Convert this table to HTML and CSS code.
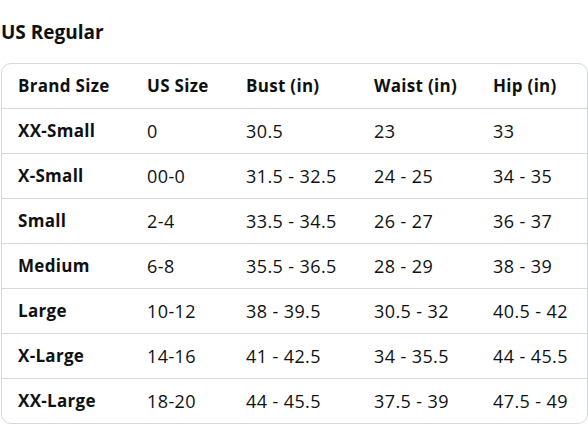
FILE: index.html
```html
<!DOCTYPE html>
<html>
<head>
<meta charset="utf-8">
<link rel="stylesheet" href="styles.css">
</head>
<body>
<h2 class="title">US Regular</h2>
<div class="box">
<table class="chart">
<thead>
<tr><th>Brand Size</th><th>US Size</th><th>Bust (in)</th><th>Waist (in)</th><th>Hip (in)</th></tr>
</thead>
<tbody>
<tr><th>XX-Small</th><td>0</td><td>30.5</td><td>23</td><td>33</td></tr>
<tr><th>X-Small</th><td>00-0</td><td>31.5 - 32.5</td><td>24 - 25</td><td>34 - 35</td></tr>
<tr><th>Small</th><td>2-4</td><td>33.5 - 34.5</td><td>26 - 27</td><td>36 - 37</td></tr>
<tr><th>Medium</th><td>6-8</td><td>35.5 - 36.5</td><td>28 - 29</td><td>38 - 39</td></tr>
<tr><th>Large</th><td>10-12</td><td>38 - 39.5</td><td>30.5 - 32</td><td>40.5 - 42</td></tr>
<tr><th>X-Large</th><td>14-16</td><td>41 - 42.5</td><td>34 - 35.5</td><td>44 - 45.5</td></tr>
<tr><th>XX-Large</th><td>18-20</td><td>44 - 45.5</td><td>37.5 - 39</td><td>47.5 - 49</td></tr>
</tbody>
</table>
</div>
</body>
</html>
```
FILE: styles.css
```css
html, body {
  margin: 0;
  padding: 0;
  background: #ffffff;
}
body {
  font-family: "Open Sans", "Noto Sans", Arial, sans-serif;
  color: #0f1111;
  padding-left: 1px;
  width: 587px;
}
.title {
  margin: 0;
  padding-top: 20px;
  height: 63px;
  box-sizing: border-box;
  font-size: 19px;
  font-weight: 700;
  line-height: 24px;
}
.box {
  border: 1px solid #d5d9d9;
  border-radius: 10px;
  overflow: hidden;
}
.chart {
  width: 100%;
  border-collapse: collapse;
  table-layout: fixed;
}
.chart th, .chart td {
  box-sizing: border-box;
  height: 44px;
  padding: 0 0 0 16px;
  text-align: left;
  vertical-align: middle;
  white-space: nowrap;
}
.chart th {
  font-size: 17px;
  font-weight: 700;
  letter-spacing: 0.3px;
}
.chart td {
  font-size: 18px;
  font-weight: 400;
  letter-spacing: 0.4px;
}
.chart tbody th, .chart tbody td {
  border-top: 1px solid #d5d9d9;
  height: 45px;
}
.chart thead th:nth-child(1) { width: 129px; }
.chart thead th:nth-child(2) { width: 99px; }
.chart thead th:nth-child(3) { width: 128px; }
.chart thead th:nth-child(4) { width: 119px; }
```
